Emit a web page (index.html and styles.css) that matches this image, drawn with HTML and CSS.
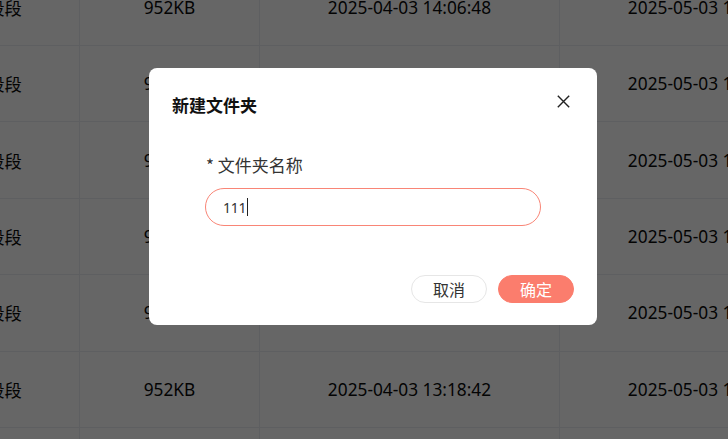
FILE: index.html
```html
<!DOCTYPE html>
<html lang="zh-CN">
<head>
<meta charset="utf-8">
<title>新建文件夹</title>
<link rel="stylesheet" href="styles.css">
</head>
<body>
<div class="page">
  <table class="files">
    <tbody>
      <tr><td class="c1">段段</td><td class="c2">952KB</td><td class="c3">2025-04-03 14:06:48</td><td class="c4">2025-05-03 14:06:48</td></tr>
      <tr><td class="c1">段段</td><td class="c2">952KB</td><td class="c3">2025-04-03 14:02:11</td><td class="c4">2025-05-03 14:02:11</td></tr>
      <tr><td class="c1">段段</td><td class="c2">952KB</td><td class="c3">2025-04-03 13:55:30</td><td class="c4">2025-05-03 13:55:30</td></tr>
      <tr><td class="c1">段段</td><td class="c2">952KB</td><td class="c3">2025-04-03 13:40:07</td><td class="c4">2025-05-03 13:40:07</td></tr>
      <tr><td class="c1">段段</td><td class="c2">952KB</td><td class="c3">2025-04-03 13:26:19</td><td class="c4">2025-05-03 13:26:19</td></tr>
      <tr><td class="c1">段段</td><td class="c2">952KB</td><td class="c3">2025-04-03 13:18:42</td><td class="c4">2025-05-03 13:18:42</td></tr>
      <tr><td class="c1">段段</td><td class="c2">952KB</td><td class="c3">2025-04-03 13:10:05</td><td class="c4">2025-05-03 13:10:05</td></tr>
    </tbody>
  </table>

  <div class="overlay">
    <div class="dialog" role="dialog" aria-label="新建文件夹">
      <div class="dialog-header">
        <span class="dialog-title">新建文件夹</span>
        <button class="close" aria-label="关闭">
          <svg width="13" height="13" viewBox="0 0 13 13"><path d="M0.8 0.8 L12.2 12.2 M12.2 0.8 L0.8 12.2" stroke="#222" stroke-width="1.4" fill="none"/></svg>
        </button>
      </div>
      <div class="dialog-body">
        <div class="form-label">* 文件夹名称</div>
        <div class="input"><span class="input-text">111</span><span class="caret"></span></div>
      </div>
      <div class="dialog-footer">
        <button class="btn btn-cancel">取消</button>
        <button class="btn btn-ok">确定</button>
      </div>
    </div>
  </div>
</div>
</body>
</html>
```

FILE: styles.css
```css
* { box-sizing: border-box; }
html, body { margin: 0; padding: 0; }
body {
  font-family: "Noto Sans", "Noto Sans CJK SC", sans-serif;
  background: #fff;
}
.page {
  width: 728px;
  height: 439px;
  overflow: hidden;
  position: relative;
  background: #fff;
}
.files {
  border-collapse: collapse;
  table-layout: fixed;
  margin-left: -71px;
  margin-top: -31.4px;
  width: 930px;
}
.files td {
  height: 76.4px;
  border: 1px solid #ebeef2;
  text-align: center;
  vertical-align: middle;
  font-size: 17.3px;
  color: #0a0a0a;
  white-space: nowrap;
  overflow: hidden;
  padding: 0;
}
.files .c1 { width: 150px; }
.files .c2 { width: 180px; }
.files .c3 { width: 300px; }
.files .c4 { width: 300px; }

.overlay {
  position: absolute;
  inset: 0;
  background: rgba(0, 0, 0, 0.6);
}
.dialog {
  position: absolute;
  left: 149px;
  top: 68px;
  width: 448px;
  height: 257px;
  background: #fff;
  border-radius: 8px;
  display: flex;
  flex-direction: column;
  font-family: "Noto Sans CJK SC", sans-serif;
}
.dialog-header {
  display: flex;
  justify-content: space-between;
  align-items: flex-start;
  padding: 25px 27px 0 23px;
}
.dialog-title {
  font-size: 17px;
  line-height: 24px;
  font-weight: 700;
  color: #111;
}
.close {
  border: 0;
  background: none;
  padding: 0;
  margin-top: 2px;
  width: 13px;
  height: 13px;
  display: flex;
}
.dialog-body {
  padding: 36px 0 0 56px;
}
.form-label {
  font-size: 17px;
  line-height: 24px;
  color: #333;
  padding-left: 1px;
}
.input {
  margin-top: 11px;
  width: 336px;
  height: 38px;
  border: 1px solid #f98576;
  border-radius: 19px;
  display: flex;
  align-items: center;
  padding-left: 17px;
  font-family: "Noto Sans", sans-serif;
  font-size: 14px;
  letter-spacing: -0.3px;
  color: #333;
}
.caret {
  display: inline-block;
  width: 1px;
  height: 18px;
  background: #222;
  margin-left: 1px;
}
.dialog-footer {
  margin-top: auto;
  display: flex;
  justify-content: flex-end;
  gap: 11px;
  padding: 0 23px 22px 0;
}
.btn {
  width: 76px;
  height: 28px;
  border-radius: 14px;
  font-family: "Noto Sans CJK SC", sans-serif;
  font-size: 16px;
  line-height: 1;
  padding: 0;
}
.btn-cancel {
  background: #fff;
  border: 1px solid #e6e6e6;
  color: #333;
}
.btn-ok {
  background: #fb7d6d;
  border: 1px solid #fb7d6d;
  color: #fff;
}
```
